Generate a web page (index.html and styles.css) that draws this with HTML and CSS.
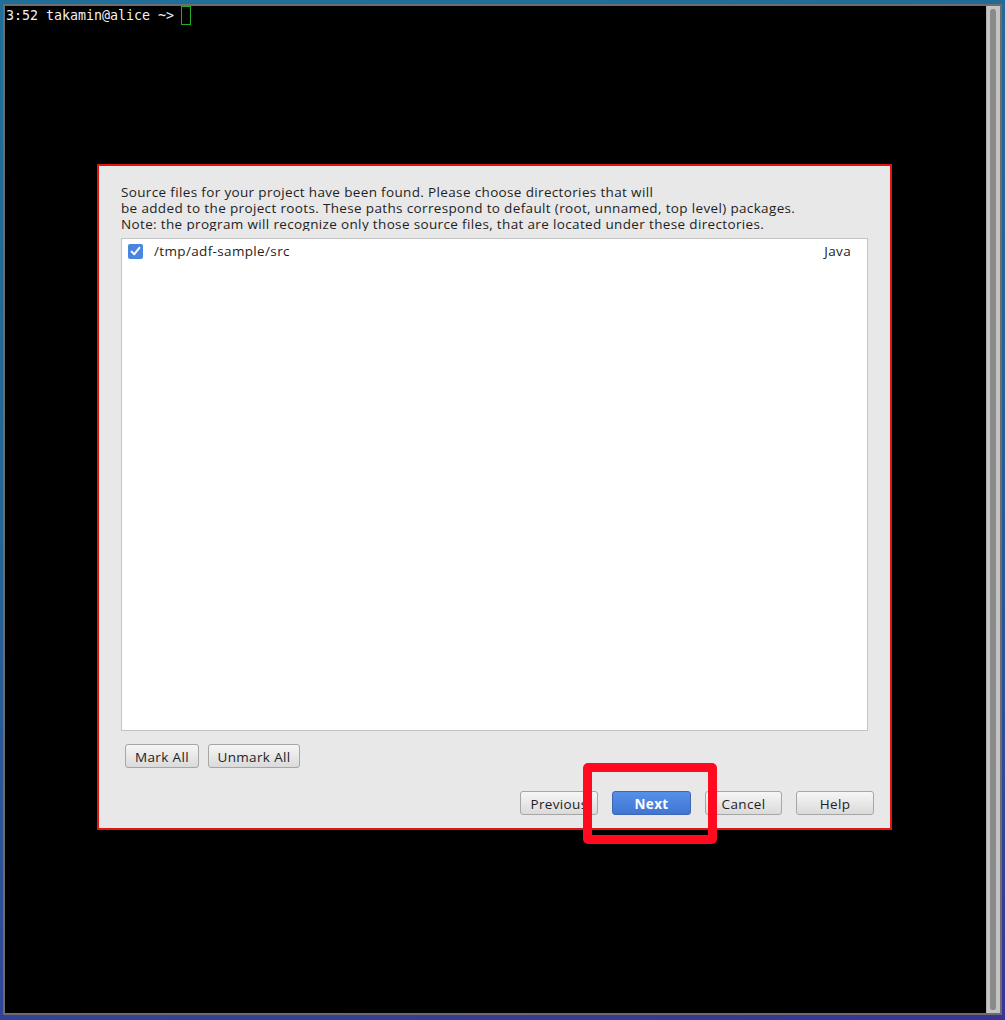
FILE: index.html
```html
<!DOCTYPE html>
<html lang="en">
<head>
<meta charset="utf-8">
<title>Terminal with import dialog</title>
<link rel="stylesheet" href="styles.css">
</head>
<body>
<div class="desktop">
  <div class="term">
    <div class="term-screen">
      <div class="prompt">3:52 takamin@alice ~&gt; <span class="cursor"></span></div>
    </div>
    <div class="scrollbar"><div class="thumb"></div></div>
  </div>

  <div class="dialog">
    <div class="intro">
      <p>Source files for your project have been found. Please choose directories that will</p>
      <p>be added to the project roots. These paths correspond to default (root, unnamed, top level) packages.</p>
      <p>Note: the program will recognize only those source files, that are located under these directories.</p>
    </div>
    <div class="list">
      <div class="row">
        <span class="check">
          <svg width="15" height="15" viewBox="0 0 15 15"><path d="M3.6 7.6 L6.3 10.2 L11.4 3.8" fill="none" stroke="#fff" stroke-width="2" stroke-linecap="round" stroke-linejoin="round"/></svg>
        </span>
        <span class="path">/tmp/adf-sample/src</span>
        <span class="lang">Java</span>
      </div>
    </div>
    <div class="mark-row">
      <button class="btn btn-mark">Mark All</button>
      <button class="btn btn-unmark">Unmark All</button>
    </div>
    <div class="nav-row">
      <button class="btn btn-nav">Previous</button>
      <button class="btn btn-nav btn-primary">Next</button>
      <button class="btn btn-nav btn-cancel">Cancel</button>
      <button class="btn btn-nav">Help</button>
    </div>
  </div>

  <div class="highlight"></div>
</div>
</body>
</html>
```

FILE: styles.css
```css
html, body {
  margin: 0;
  padding: 0;
}

body {
  width: 1005px;
  height: 1020px;
  overflow: hidden;
}

.desktop {
  position: relative;
  width: 1005px;
  height: 1020px;
  box-sizing: border-box;
  padding: 4px 3px 5px 3px;
  background: linear-gradient(170deg, #1f6f9a 0%, #226596 45%, #2d4f98 75%, #3a3396 100%);
}

.term {
  display: flex;
  width: 999px;
  height: 1011px;
  box-sizing: border-box;
  border: 2px solid #6c6c6c;
  background: #000;
}

.term-screen {
  flex: 1;
  padding: 0 0 0 1px;
  background: #000;
}

.prompt {
  font-family: "DejaVu Sans Mono", monospace;
  font-size: 13.3px;
  line-height: 19px;
  color: #f2f2f2;
  display: flex;
  align-items: center;
  white-space: pre;
}

.cursor {
  display: inline-block;
  width: 10px;
  height: 19px;
  box-sizing: border-box;
  border: 1px solid #1fae1f;
  margin-left: -1px;
}

.scrollbar {
  width: 14px;
  background: #c4c4c4;
  box-sizing: border-box;
  padding: 3px 4px 3px 3px;
  border-left: 1px solid #b0b0b0;
}

.thumb {
  height: 100%;
  background: #8a8a8a;
  border-radius: 4px 4px 3px 3px;
}

/* dialog */
.dialog {
  position: absolute;
  left: 97px;
  top: 164px;
  width: 795px;
  height: 666px;
  box-sizing: border-box;
  border: 2px solid #e31414;
  background: #e8e8e8;
  padding: 18px 22px 12px 22px;
  display: flex;
  flex-direction: column;
  font-family: "Open Sans", "Noto Sans", sans-serif;
  font-size: 13.5px;
  letter-spacing: 0.35px;
  color: #1e1e1e;
}

.intro {
  height: 47px;
  overflow: hidden;
  margin-bottom: 7px;
}

.intro p {
  margin: 0;
  line-height: 16px;
  white-space: nowrap;
}

.list {
  height: 493px;
  box-sizing: border-box;
  background: #fff;
  border: 1px solid #c4c4c4;
}

.row {
  display: flex;
  align-items: center;
  height: 22px;
  padding: 1px 16px 0 6px;
}

.check {
  width: 15px;
  height: 15px;
  border-radius: 2px;
  background: #4a86df;
  display: flex;
  margin-right: 11px;
}

.path {
  flex: 1;
}

.lang {
  color: #1e1e1e;
}

.mark-row {
  display: flex;
  gap: 9px;
  padding-left: 4px;
  margin-top: 13px;
}

.btn {
  height: 24px;
  box-sizing: border-box;
  border: 1px solid #a6a6a6;
  border-radius: 3px;
  background: linear-gradient(#f6f6f6, #dadada);
  font-family: "Open Sans", "Noto Sans", sans-serif;
  font-size: 13.5px;
  letter-spacing: 0.35px;
  color: #1e1e1e;
  padding: 0;
  line-height: 22px;
  padding-top: 1px;
  white-space: nowrap;
  overflow: hidden;
}

.btn-mark {
  width: 74px;
}

.btn-unmark {
  width: 92px;
}

.nav-row {
  display: flex;
  justify-content: flex-end;
  gap: 14px;
  margin-top: 23px;
  margin-right: -6px;
}

.btn-nav {
  width: 78px;
}

.btn-cancel {
  width: 77px;
}

.btn-primary {
  width: 79px;
  background: linear-gradient(#5690e6, #3f76d3);
  border-color: #3d68b6;
  color: #fff;
  font-weight: bold;
}

.highlight {
  position: absolute;
  left: 583px;
  top: 763px;
  width: 134px;
  height: 81px;
  box-sizing: border-box;
  border: 9px solid #ff0a1e;
  border-radius: 5px;
}
```
